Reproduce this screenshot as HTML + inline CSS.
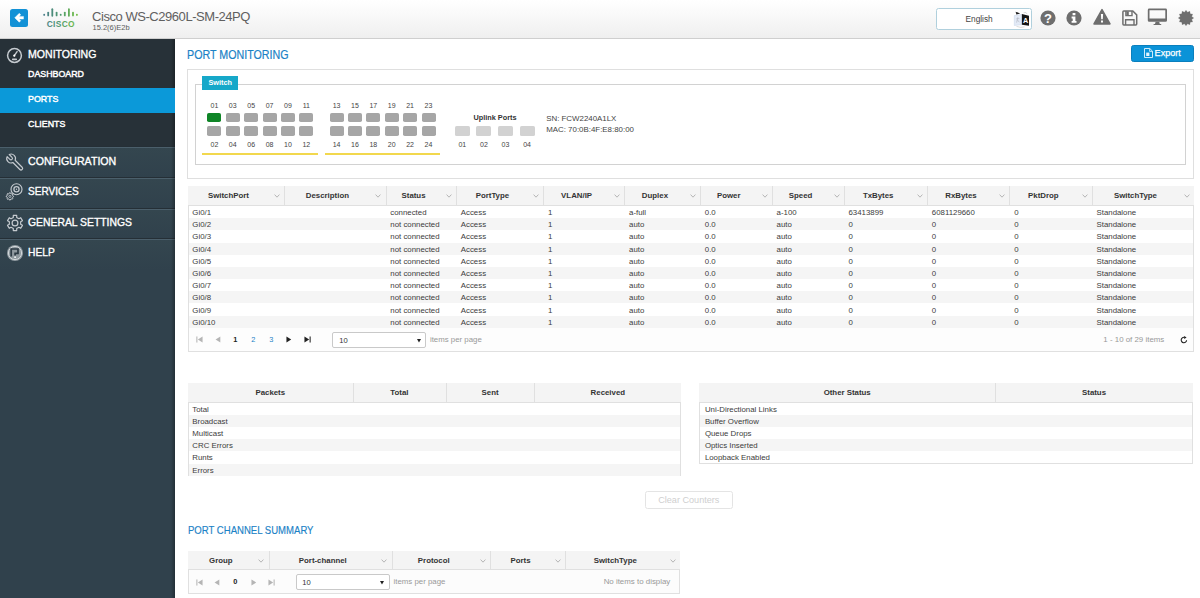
<!DOCTYPE html>
<html lang="en"><head><meta charset="utf-8"><title>Port Monitoring</title>
<style>
html,body{margin:0;padding:0;}
body{width:1200px;height:598px;overflow:hidden;position:relative;background:#fff;font-family:"Liberation Sans",sans-serif;}
.t{position:absolute;white-space:pre;}
.b{position:absolute;}
svg{display:block;overflow:visible;}
</style></head><body>
<div class="b" style="left:0.00px;top:0.00px;width:1200.00px;height:38.00px;background:linear-gradient(#ffffff,#f9f9f9 40%,#efefef);border-bottom:1px solid #cfcfcf;"></div>
<div class="b" style="left:10.00px;top:9.00px;width:17.50px;height:17.50px;background:#1291d6;border-radius:2.5px;"><svg width="17.5" height="17.5" viewBox="0 0 35 35" style="display:block"><path d="M9.5 17.5 L18.5 8.5 L21.5 11.5 L18.2 14.8 H27 V20.2 H18.2 L21.5 23.5 L18.5 26.5 Z" fill="#fff" stroke="#fff" stroke-width="0.8" stroke-linejoin="round"/></svg></div>
<svg class="b" style="left:42px;top:7px" width="38" height="22" viewBox="42 7 38 22"><defs><linearGradient id="cg" gradientUnits="userSpaceOnUse" x1="43" y1="0" x2="78" y2="0"><stop offset="0" stop-color="#4b7d8c"/><stop offset="0.5" stop-color="#4f9a6e"/><stop offset="1" stop-color="#74c043"/></linearGradient></defs><line x1="44.2" y1="14.6" x2="44.2" y2="14.95" stroke="url(#cg)" stroke-width="1.8" stroke-linecap="round"/><line x1="48.2" y1="12.6" x2="48.2" y2="15.4" stroke="url(#cg)" stroke-width="1.8" stroke-linecap="round"/><line x1="52.3" y1="9.2" x2="52.3" y2="15.8" stroke="url(#cg)" stroke-width="1.8" stroke-linecap="round"/><line x1="56.6" y1="12.6" x2="56.6" y2="15.4" stroke="url(#cg)" stroke-width="1.8" stroke-linecap="round"/><line x1="60.7" y1="14.6" x2="60.7" y2="14.95" stroke="url(#cg)" stroke-width="1.8" stroke-linecap="round"/><line x1="64.8" y1="12.6" x2="64.8" y2="15.4" stroke="url(#cg)" stroke-width="1.8" stroke-linecap="round"/><line x1="68.9" y1="9.2" x2="68.9" y2="15.8" stroke="url(#cg)" stroke-width="1.8" stroke-linecap="round"/><line x1="73.0" y1="12.6" x2="73.0" y2="15.4" stroke="url(#cg)" stroke-width="1.8" stroke-linecap="round"/><line x1="76.9" y1="14.6" x2="76.9" y2="14.95" stroke="url(#cg)" stroke-width="1.8" stroke-linecap="round"/><text x="60.8" y="26.5" text-anchor="middle" font-family="Liberation Sans, sans-serif" font-weight="bold" font-size="8.4" letter-spacing="0.35" fill="url(#cg)">CISCO</text></svg>
<div class="t" style="top:10.00px;height:14px;line-height:14px;font-size:13px;color:#606060;letter-spacing:-0.45px;left:92.00px;">Cisco WS-C2960L-SM-24PQ</div>
<div class="t" style="top:21.00px;height:14px;line-height:14px;font-size:7.5px;color:#5c5c5c;left:92.50px;">15.2(6)E2b</div>
<div class="b" style="left:936.10px;top:7.90px;width:95.60px;height:21.80px;box-sizing:border-box;background:#fff;border:1.4px solid #b0d0dd;border-radius:2.5px;"></div>
<div class="t" style="top:12.30px;height:14px;line-height:14px;font-size:8.3px;color:#444;left:965.50px;">English</div>
<svg class="b" style="left:1013px;top:10px" width="18" height="19" viewBox="0 0 18 19"><path d="M1.3 5.6 L8.9 4.4 V14.7 L1.3 15.5 Z" fill="#e3eaf6" stroke="#c5d2e8" stroke-width="0.5"/><path d="M4.9 7.2 L3.6 12.6 M4.2 9.6 L6.3 12.2 M3.4 8.6 H6.4" stroke="#b4b9c4" stroke-width="0.7" fill="none"/><path d="M2.6 1.7 L7.2 3.6 L3.4 4.6 Z" fill="#1c1c1c"/><path d="M8.9 4 L16 5.8 V15.8 L8.9 14.7 Z" fill="#161616"/><text x="12.5" y="13.2" text-anchor="middle" font-family="Liberation Sans, sans-serif" font-weight="bold" font-size="7.2" fill="#fff">A</text><path d="M3.5 16.4 Q8 18.2 11.5 16.8" stroke="#c4c4c4" stroke-width="0.6" fill="none"/><path d="M10.6 2.6 Q13.6 1.6 14.2 4.2" stroke="#c4c4c4" stroke-width="0.6" fill="none"/></svg>
<svg class="b" style="left:1040px;top:9.5px" width="16" height="16" viewBox="0 0 16 16"><circle cx="8" cy="8" r="7.6" fill="#6e6e6e"/><text x="8" y="12.7" text-anchor="middle" font-family="Liberation Sans, sans-serif" font-weight="bold" font-size="13" fill="#fff">?</text></svg>
<svg class="b" style="left:1066px;top:9.5px" width="16" height="16" viewBox="0 0 16 16"><circle cx="8" cy="8" r="7.6" fill="#6e6e6e"/><path d="M6.6 3 H9.4 V5.3 H6.6 Z M5.6 6.6 H9.4 V11 H10.5 V12.8 H5.6 V11 H6.7 V8.4 H5.6 Z" fill="#fff"/></svg>
<svg class="b" style="left:1092px;top:7.7px" width="20" height="18" viewBox="0 0 20 18"><path d="M10 1.6 L18 15.9 H2 Z" fill="#6e6e6e" stroke="#6e6e6e" stroke-width="1.5" stroke-linejoin="round"/><path d="M8.9 6 H11.1 L10.8 11.3 H9.2 Z M9 12.5 H11 V14.5 H9 Z" fill="#fff"/></svg>
<svg class="b" style="left:1121px;top:9.7px" width="17" height="16" viewBox="0 0 17 16"><path d="M2.8 1 H11.8 L15.7 4.9 V14.1 Q15.7 15 14.8 15 H2.8 Q1.9 15 1.9 14.1 V1.9 Q1.9 1 2.8 1 Z" fill="none" stroke="#6e6e6e" stroke-width="1.5"/><path d="M4.9 1 V5.6 H11 V1" fill="none" stroke="#6e6e6e" stroke-width="1.4"/><path d="M5.4 1.4 H7.8 V5 H5.4 Z" fill="#6e6e6e"/><path d="M4.6 15 V9.8 H13 V15" fill="none" stroke="#6e6e6e" stroke-width="1.4"/></svg>
<svg class="b" style="left:1147px;top:7.6px" width="21" height="18" viewBox="0 0 21 18"><path d="M2.2 0.6 H18.6 Q20 0.6 20 2 V12.4 Q20 13.8 18.6 13.8 H2.2 Q0.8 13.8 0.8 12.4 V2 Q0.8 0.6 2.2 0.6 Z M2.5 2.2 V10.4 H18.3 V2.2 Z" fill="#6e6e6e" fill-rule="evenodd"/><path d="M8.6 13.8 H12.2 L12.8 15.9 H14.2 V16.9 H6.6 V15.9 H8 Z" fill="#6e6e6e"/></svg>
<svg class="b" style="left:1177.9px;top:9.6px" width="16" height="16" viewBox="0 0 16 16"><polygon points="8.00,0.30 9.53,2.30 11.85,1.33 12.17,3.83 14.67,4.15 13.70,6.47 15.70,8.00 13.70,9.53 14.67,11.85 12.17,12.17 11.85,14.67 9.53,13.70 8.00,15.70 6.47,13.70 4.15,14.67 3.83,12.17 1.33,11.85 2.30,9.53 0.30,8.00 2.30,6.47 1.33,4.15 3.83,3.83 4.15,1.33 6.47,2.30" fill="#6e6e6e" stroke="#6e6e6e" stroke-width="0.3" stroke-linejoin="round"/></svg>
<div class="b" style="left:0.00px;top:38.60px;width:175.00px;height:559.40px;background:#30414c;"></div>
<div class="b" style="left:0.00px;top:38.60px;width:175.00px;height:108.90px;background:#273138;"></div>
<div class="b" style="left:0.00px;top:88.00px;width:175.00px;height:24.70px;background:#0b99d9;"></div>
<div class="b" style="left:0.00px;top:147.30px;width:175.00px;height:30.70px;background:linear-gradient(#34464f,#30414c);border-top:1px solid #4b5f6b;box-sizing:border-box;"></div>
<div class="b" style="left:0.00px;top:146.30px;width:175.00px;height:1.00px;background:#252f36;"></div>
<div class="t" style="top:154.00px;height:14px;line-height:14px;font-size:11px;color:#fff;left:27.60px;transform:scaleX(0.965);transform-origin:0 50%;-webkit-text-stroke:0.35px #fff;">CONFIGURATION</div>
<div class="b" style="left:0.00px;top:178.00px;width:175.00px;height:30.70px;background:linear-gradient(#34464f,#30414c);border-top:1px solid #4b5f6b;box-sizing:border-box;"></div>
<div class="b" style="left:0.00px;top:177.00px;width:175.00px;height:1.00px;background:#252f36;"></div>
<div class="t" style="top:184.40px;height:14px;line-height:14px;font-size:11px;color:#fff;left:27.60px;transform:scaleX(0.915);transform-origin:0 50%;-webkit-text-stroke:0.35px #fff;">SERVICES</div>
<div class="b" style="left:0.00px;top:208.60px;width:175.00px;height:30.70px;background:linear-gradient(#34464f,#30414c);border-top:1px solid #4b5f6b;box-sizing:border-box;"></div>
<div class="b" style="left:0.00px;top:207.60px;width:175.00px;height:1.00px;background:#252f36;"></div>
<div class="t" style="top:214.90px;height:14px;line-height:14px;font-size:11px;color:#fff;left:27.60px;transform:scaleX(0.943);transform-origin:0 50%;-webkit-text-stroke:0.35px #fff;">GENERAL SETTINGS</div>
<div class="b" style="left:0.00px;top:239.00px;width:175.00px;height:30.70px;background:linear-gradient(#34464f,#30414c);border-top:1px solid #4b5f6b;box-sizing:border-box;"></div>
<div class="b" style="left:0.00px;top:238.00px;width:175.00px;height:1.00px;background:#252f36;"></div>
<div class="t" style="top:245.40px;height:14px;line-height:14px;font-size:11px;color:#fff;left:27.60px;transform:scaleX(0.93);transform-origin:0 50%;-webkit-text-stroke:0.35px #fff;">HELP</div>
<div class="b" style="left:171.00px;top:39.00px;width:4.00px;height:559.00px;background:linear-gradient(90deg,rgba(0,0,0,0),rgba(0,0,0,0.28));"></div>
<div class="b" style="left:0.00px;top:88.00px;width:175.00px;height:24.70px;background:#0b99d9;"></div>
<div class="t" style="top:47.20px;height:14px;line-height:14px;font-size:11px;color:#fff;left:27.70px;transform:scaleX(0.96);transform-origin:0 50%;-webkit-text-stroke:0.35px #fff;">MONITORING</div>
<div class="t" style="top:66.80px;height:14px;line-height:14px;font-size:9.7px;color:#fff;left:28.00px;transform:scaleX(0.912);transform-origin:0 50%;-webkit-text-stroke:0.45px #fff;">DASHBOARD</div>
<div class="t" style="top:92.30px;height:14px;line-height:14px;font-size:9.7px;color:#fff;left:28.00px;transform:scaleX(0.912);transform-origin:0 50%;-webkit-text-stroke:0.45px #fff;">PORTS</div>
<div class="t" style="top:117.20px;height:14px;line-height:14px;font-size:9.7px;color:#fff;left:28.00px;transform:scaleX(0.912);transform-origin:0 50%;-webkit-text-stroke:0.45px #fff;">CLIENTS</div>
<svg class="b" style="left:6px;top:46.5px" width="17" height="17" viewBox="0 0 17 17"><circle cx="8.5" cy="8.5" r="6.9" fill="none" stroke="#c5cacf" stroke-width="1.5"/><path d="M8.3 8.7 L11.1 4.6" stroke="#c5cacf" stroke-width="1.4" stroke-linecap="round"/><circle cx="8.3" cy="8.7" r="1.1" fill="#fff"/><rect x="6" y="11.6" width="5" height="1.6" rx="0.6" fill="#c5cacf"/></svg>
<svg class="b" style="left:5px;top:152px" width="19" height="19" viewBox="0 0 19 19"><g transform="translate(6.1,6.5) rotate(-45)"><path d="M-1.5 -4.14 V-0.2 A1.5 1.5 0 0 0 1.5 -0.2 V-4.14 A4.4 4.4 0 0 1 1.6 4.1 V14 A1.6 1.6 0 0 1 -1.6 14 V4.1 A4.4 4.4 0 0 1 -1.5 -4.14 Z" fill="none" stroke="#c5cacf" stroke-width="1.15" stroke-linejoin="round"/></g></svg>
<svg class="b" style="left:2px;top:181px" width="22" height="22" viewBox="0 0 22 22"><circle cx="14.5" cy="8.2" r="5.5" fill="none" stroke="#c5cacf" stroke-width="1.15"/><circle cx="14.5" cy="8.2" r="2.6" fill="none" stroke="#c5cacf" stroke-width="1.3"/><circle cx="14.5" cy="8.2" r="0.7" fill="#c5cacf"/><polygon points="11.58,15.04 11.58,15.76 10.58,16.21 10.37,16.72 10.76,17.75 10.25,18.26 9.22,17.87 8.71,18.08 8.26,19.08 7.54,19.08 7.09,18.08 6.58,17.87 5.55,18.26 5.04,17.75 5.43,16.72 5.22,16.21 4.22,15.76 4.22,15.04 5.22,14.59 5.43,14.08 5.04,13.05 5.55,12.54 6.58,12.93 7.09,12.72 7.54,11.72 8.26,11.72 8.71,12.72 9.22,12.93 10.25,12.54 10.76,13.05 10.37,14.08 10.58,14.59" fill="none" stroke="#c5cacf" stroke-width="1.0" stroke-linejoin="round"/><circle cx="7.9" cy="15.4" r="1.1" fill="none" stroke="#c5cacf" stroke-width="0.8"/></svg>
<svg class="b" style="left:5.6px;top:213.9px" width="18" height="18" viewBox="0 0 18 18"><polygon points="7.29,3.46 7.30,1.39 10.70,1.39 10.71,3.46 12.94,4.75 14.74,3.72 16.44,6.67 14.66,7.71 14.66,10.29 16.44,11.33 14.74,14.28 12.94,13.25 10.71,14.54 10.70,16.61 7.30,16.61 7.29,14.54 5.06,13.25 3.26,14.28 1.56,11.33 3.34,10.29 3.34,7.71 1.56,6.67 3.26,3.72 5.06,4.75" fill="none" stroke="#c5cacf" stroke-width="1.2" stroke-linejoin="round"/><circle cx="9" cy="9" r="2.9" fill="none" stroke="#c5cacf" stroke-width="1.2"/></svg>
<svg class="b" style="left:5.7px;top:244.2px" width="18" height="18" viewBox="0 0 18 18"><circle cx="9" cy="9" r="8" fill="#8f999f"/><circle cx="9" cy="9" r="6.6" fill="none" stroke="#d3d8db" stroke-width="1"/><path d="M5.2 12.6 V5 H12 V9.4 H9.1 V11.4" fill="none" stroke="#2c3a44" stroke-width="1.7" stroke-linejoin="miter"/><rect x="8.2" y="12.4" width="1.8" height="1.6" fill="#e8ebed"/></svg>
<div class="t" style="top:48.00px;height:14px;line-height:14px;font-size:12.2px;color:#1b82c6;left:187.40px;transform:scaleX(0.877);transform-origin:0 50%;-webkit-text-stroke:0.2px #1b82c6;">PORT MONITORING</div>
<div class="b" style="left:1131.30px;top:45.00px;width:62.60px;height:17.30px;box-sizing:border-box;background:#0b93d8;border:1px solid #0a7fbd;border-radius:2.5px;"></div>
<svg class="b" style="left:1144px;top:48.2px" width="9" height="10" viewBox="0 0 9 10"><path d="M0.5 0.5 H5.8 L8.5 3.2 V9.5 H0.5 Z" fill="none" stroke="#e6f6ff" stroke-width="0.9" stroke-linejoin="round"/><path d="M5.6 0.6 V3.4 H8.4" fill="none" stroke="#e6f6ff" stroke-width="0.8"/><path d="M2.2 4.6 H5.4 V8 H2.2 Z" fill="#e6f6ff"/></svg>
<div class="t" style="top:45.80px;height:14px;line-height:14px;font-size:9.1px;color:#fff;left:1154.60px;-webkit-text-stroke:0.25px #fff;">Export</div>
<div class="b" style="left:187.00px;top:69.30px;width:1006.50px;height:110.20px;box-sizing:border-box;border:1px solid #dfdfdf;background:#fff;"></div>
<div class="b" style="left:194.50px;top:84.00px;width:991.50px;height:81.00px;box-sizing:border-box;border:1px solid #d2d2d2;background:#fff;"></div>
<div class="b" style="left:202.00px;top:76.30px;width:35.50px;height:13.50px;background:#16a8c9;"></div>
<div class="t" style="top:76.10px;height:14px;line-height:14px;font-size:7.3px;color:#fff;font-weight:bold;left:208.40px;">Switch</div>
<div class="b" style="left:207.40px;top:112.60px;width:14.00px;height:9.90px;background:#0f8527;border-radius:1.8px;"></div>
<div class="b" style="left:207.40px;top:126.40px;width:14.00px;height:10.10px;background:#a6a6a6;border-radius:1.8px;"></div>
<div class="t" style="top:98.80px;height:14px;line-height:14px;font-size:7px;color:#444;left:64.40px;width:300px;text-align:center;">01</div>
<div class="t" style="top:138.30px;height:14px;line-height:14px;font-size:7px;color:#444;left:64.40px;width:300px;text-align:center;">02</div>
<div class="b" style="left:225.78px;top:112.60px;width:14.00px;height:9.90px;background:#a6a6a6;border-radius:1.8px;"></div>
<div class="b" style="left:225.78px;top:126.40px;width:14.00px;height:10.10px;background:#a6a6a6;border-radius:1.8px;"></div>
<div class="t" style="top:98.80px;height:14px;line-height:14px;font-size:7px;color:#444;left:82.78px;width:300px;text-align:center;">03</div>
<div class="t" style="top:138.30px;height:14px;line-height:14px;font-size:7px;color:#444;left:82.78px;width:300px;text-align:center;">04</div>
<div class="b" style="left:244.16px;top:112.60px;width:14.00px;height:9.90px;background:#a6a6a6;border-radius:1.8px;"></div>
<div class="b" style="left:244.16px;top:126.40px;width:14.00px;height:10.10px;background:#a6a6a6;border-radius:1.8px;"></div>
<div class="t" style="top:98.80px;height:14px;line-height:14px;font-size:7px;color:#444;left:101.16px;width:300px;text-align:center;">05</div>
<div class="t" style="top:138.30px;height:14px;line-height:14px;font-size:7px;color:#444;left:101.16px;width:300px;text-align:center;">06</div>
<div class="b" style="left:262.54px;top:112.60px;width:14.00px;height:9.90px;background:#a6a6a6;border-radius:1.8px;"></div>
<div class="b" style="left:262.54px;top:126.40px;width:14.00px;height:10.10px;background:#a6a6a6;border-radius:1.8px;"></div>
<div class="t" style="top:98.80px;height:14px;line-height:14px;font-size:7px;color:#444;left:119.54px;width:300px;text-align:center;">07</div>
<div class="t" style="top:138.30px;height:14px;line-height:14px;font-size:7px;color:#444;left:119.54px;width:300px;text-align:center;">08</div>
<div class="b" style="left:280.92px;top:112.60px;width:14.00px;height:9.90px;background:#a6a6a6;border-radius:1.8px;"></div>
<div class="b" style="left:280.92px;top:126.40px;width:14.00px;height:10.10px;background:#a6a6a6;border-radius:1.8px;"></div>
<div class="t" style="top:98.80px;height:14px;line-height:14px;font-size:7px;color:#444;left:137.92px;width:300px;text-align:center;">09</div>
<div class="t" style="top:138.30px;height:14px;line-height:14px;font-size:7px;color:#444;left:137.92px;width:300px;text-align:center;">10</div>
<div class="b" style="left:299.30px;top:112.60px;width:14.00px;height:9.90px;background:#a6a6a6;border-radius:1.8px;"></div>
<div class="b" style="left:299.30px;top:126.40px;width:14.00px;height:10.10px;background:#a6a6a6;border-radius:1.8px;"></div>
<div class="t" style="top:98.80px;height:14px;line-height:14px;font-size:7px;color:#444;left:156.30px;width:300px;text-align:center;">11</div>
<div class="t" style="top:138.30px;height:14px;line-height:14px;font-size:7px;color:#444;left:156.30px;width:300px;text-align:center;">12</div>
<div class="b" style="left:329.60px;top:112.60px;width:14.00px;height:9.90px;background:#a6a6a6;border-radius:1.8px;"></div>
<div class="b" style="left:329.60px;top:126.40px;width:14.00px;height:10.10px;background:#a6a6a6;border-radius:1.8px;"></div>
<div class="t" style="top:98.80px;height:14px;line-height:14px;font-size:7px;color:#444;left:186.60px;width:300px;text-align:center;">13</div>
<div class="t" style="top:138.30px;height:14px;line-height:14px;font-size:7px;color:#444;left:186.60px;width:300px;text-align:center;">14</div>
<div class="b" style="left:347.98px;top:112.60px;width:14.00px;height:9.90px;background:#a6a6a6;border-radius:1.8px;"></div>
<div class="b" style="left:347.98px;top:126.40px;width:14.00px;height:10.10px;background:#a6a6a6;border-radius:1.8px;"></div>
<div class="t" style="top:98.80px;height:14px;line-height:14px;font-size:7px;color:#444;left:204.98px;width:300px;text-align:center;">15</div>
<div class="t" style="top:138.30px;height:14px;line-height:14px;font-size:7px;color:#444;left:204.98px;width:300px;text-align:center;">16</div>
<div class="b" style="left:366.36px;top:112.60px;width:14.00px;height:9.90px;background:#a6a6a6;border-radius:1.8px;"></div>
<div class="b" style="left:366.36px;top:126.40px;width:14.00px;height:10.10px;background:#a6a6a6;border-radius:1.8px;"></div>
<div class="t" style="top:98.80px;height:14px;line-height:14px;font-size:7px;color:#444;left:223.36px;width:300px;text-align:center;">17</div>
<div class="t" style="top:138.30px;height:14px;line-height:14px;font-size:7px;color:#444;left:223.36px;width:300px;text-align:center;">18</div>
<div class="b" style="left:384.74px;top:112.60px;width:14.00px;height:9.90px;background:#a6a6a6;border-radius:1.8px;"></div>
<div class="b" style="left:384.74px;top:126.40px;width:14.00px;height:10.10px;background:#a6a6a6;border-radius:1.8px;"></div>
<div class="t" style="top:98.80px;height:14px;line-height:14px;font-size:7px;color:#444;left:241.74px;width:300px;text-align:center;">19</div>
<div class="t" style="top:138.30px;height:14px;line-height:14px;font-size:7px;color:#444;left:241.74px;width:300px;text-align:center;">20</div>
<div class="b" style="left:403.12px;top:112.60px;width:14.00px;height:9.90px;background:#a6a6a6;border-radius:1.8px;"></div>
<div class="b" style="left:403.12px;top:126.40px;width:14.00px;height:10.10px;background:#a6a6a6;border-radius:1.8px;"></div>
<div class="t" style="top:98.80px;height:14px;line-height:14px;font-size:7px;color:#444;left:260.12px;width:300px;text-align:center;">21</div>
<div class="t" style="top:138.30px;height:14px;line-height:14px;font-size:7px;color:#444;left:260.12px;width:300px;text-align:center;">22</div>
<div class="b" style="left:421.50px;top:112.60px;width:14.00px;height:9.90px;background:#a6a6a6;border-radius:1.8px;"></div>
<div class="b" style="left:421.50px;top:126.40px;width:14.00px;height:10.10px;background:#a6a6a6;border-radius:1.8px;"></div>
<div class="t" style="top:98.80px;height:14px;line-height:14px;font-size:7px;color:#444;left:278.50px;width:300px;text-align:center;">23</div>
<div class="t" style="top:138.30px;height:14px;line-height:14px;font-size:7px;color:#444;left:278.50px;width:300px;text-align:center;">24</div>
<div class="b" style="left:202.30px;top:152.90px;width:115.50px;height:1.90px;background:#f2d84e;"></div>
<div class="b" style="left:324.80px;top:152.90px;width:115.50px;height:1.90px;background:#f2d84e;"></div>
<div class="t" style="top:110.90px;height:14px;line-height:14px;font-size:7.3px;color:#333;font-weight:bold;left:345.00px;width:300px;text-align:center;">Uplink Ports</div>
<div class="b" style="left:454.80px;top:126.00px;width:15.00px;height:10.20px;background:#d2d2d2;border-radius:1.6px;"></div>
<div class="t" style="top:137.90px;height:14px;line-height:14px;font-size:7px;color:#444;left:312.30px;width:300px;text-align:center;">01</div>
<div class="b" style="left:476.40px;top:126.00px;width:15.00px;height:10.20px;background:#d2d2d2;border-radius:1.6px;"></div>
<div class="t" style="top:137.90px;height:14px;line-height:14px;font-size:7px;color:#444;left:333.90px;width:300px;text-align:center;">02</div>
<div class="b" style="left:498.00px;top:126.00px;width:15.00px;height:10.20px;background:#d2d2d2;border-radius:1.6px;"></div>
<div class="t" style="top:137.90px;height:14px;line-height:14px;font-size:7px;color:#444;left:355.50px;width:300px;text-align:center;">03</div>
<div class="b" style="left:519.60px;top:126.00px;width:15.00px;height:10.20px;background:#d2d2d2;border-radius:1.6px;"></div>
<div class="t" style="top:137.90px;height:14px;line-height:14px;font-size:7px;color:#444;left:377.10px;width:300px;text-align:center;">04</div>
<div class="t" style="top:112.30px;height:14px;line-height:14px;font-size:7.9px;color:#444;left:546.20px;">SN: FCW2240A1LX</div>
<div class="t" style="top:123.40px;height:14px;line-height:14px;font-size:7.9px;color:#444;left:546.20px;">MAC: 70:0B:4F:E8:80:00</div>
<div class="b" style="left:187.50px;top:186.30px;width:1006.20px;height:165.70px;box-sizing:border-box;border:1px solid #e0e0e0;background:#fff;"></div>
<div class="b" style="left:187.50px;top:186.30px;width:1006.20px;height:19.60px;box-sizing:border-box;background:#f4f4f4;border-bottom:1px solid #e0e0e0;"></div>
<div class="t" style="top:189.20px;height:14px;line-height:14px;font-size:7.85px;color:#333;font-weight:bold;left:78.40px;width:300px;text-align:center;">SwitchPort</div>
<svg class="b" style="left:273.50px;top:194.10px" width="6" height="4" viewBox="0 0 6 4"><path d="M0.6 0.6 L3 3.2 L5.4 0.6" fill="none" stroke="#9a9a9a" stroke-width="0.7"/></svg>
<div class="b" style="left:283.70px;top:186.30px;width:1.00px;height:19.60px;background:#e0e0e0;"></div>
<div class="t" style="top:189.20px;height:14px;line-height:14px;font-size:7.85px;color:#333;font-weight:bold;left:177.40px;width:300px;text-align:center;">Description</div>
<svg class="b" style="left:375.30px;top:194.10px" width="6" height="4" viewBox="0 0 6 4"><path d="M0.6 0.6 L3 3.2 L5.4 0.6" fill="none" stroke="#9a9a9a" stroke-width="0.7"/></svg>
<div class="b" style="left:385.50px;top:186.30px;width:1.00px;height:19.60px;background:#e0e0e0;"></div>
<div class="t" style="top:189.20px;height:14px;line-height:14px;font-size:7.85px;color:#333;font-weight:bold;left:263.55px;width:300px;text-align:center;">Status</div>
<svg class="b" style="left:445.80px;top:194.10px" width="6" height="4" viewBox="0 0 6 4"><path d="M0.6 0.6 L3 3.2 L5.4 0.6" fill="none" stroke="#9a9a9a" stroke-width="0.7"/></svg>
<div class="b" style="left:456.00px;top:186.30px;width:1.00px;height:19.60px;background:#e0e0e0;"></div>
<div class="t" style="top:189.20px;height:14px;line-height:14px;font-size:7.85px;color:#333;font-weight:bold;left:342.45px;width:300px;text-align:center;">PortType</div>
<svg class="b" style="left:533.10px;top:194.10px" width="6" height="4" viewBox="0 0 6 4"><path d="M0.6 0.6 L3 3.2 L5.4 0.6" fill="none" stroke="#9a9a9a" stroke-width="0.7"/></svg>
<div class="b" style="left:543.30px;top:186.30px;width:1.00px;height:19.60px;background:#e0e0e0;"></div>
<div class="t" style="top:189.20px;height:14px;line-height:14px;font-size:7.85px;color:#333;font-weight:bold;left:426.60px;width:300px;text-align:center;">VLAN/IP</div>
<svg class="b" style="left:614.10px;top:194.10px" width="6" height="4" viewBox="0 0 6 4"><path d="M0.6 0.6 L3 3.2 L5.4 0.6" fill="none" stroke="#9a9a9a" stroke-width="0.7"/></svg>
<div class="b" style="left:624.30px;top:186.30px;width:1.00px;height:19.60px;background:#e0e0e0;"></div>
<div class="t" style="top:189.20px;height:14px;line-height:14px;font-size:7.85px;color:#333;font-weight:bold;left:504.95px;width:300px;text-align:center;">Duplex</div>
<svg class="b" style="left:689.80px;top:194.10px" width="6" height="4" viewBox="0 0 6 4"><path d="M0.6 0.6 L3 3.2 L5.4 0.6" fill="none" stroke="#9a9a9a" stroke-width="0.7"/></svg>
<div class="b" style="left:700.00px;top:186.30px;width:1.00px;height:19.60px;background:#e0e0e0;"></div>
<div class="t" style="top:189.20px;height:14px;line-height:14px;font-size:7.85px;color:#333;font-weight:bold;left:578.70px;width:300px;text-align:center;">Power</div>
<svg class="b" style="left:761.60px;top:194.10px" width="6" height="4" viewBox="0 0 6 4"><path d="M0.6 0.6 L3 3.2 L5.4 0.6" fill="none" stroke="#9a9a9a" stroke-width="0.7"/></svg>
<div class="b" style="left:771.80px;top:186.30px;width:1.00px;height:19.60px;background:#e0e0e0;"></div>
<div class="t" style="top:189.20px;height:14px;line-height:14px;font-size:7.85px;color:#333;font-weight:bold;left:650.55px;width:300px;text-align:center;">Speed</div>
<svg class="b" style="left:833.50px;top:194.10px" width="6" height="4" viewBox="0 0 6 4"><path d="M0.6 0.6 L3 3.2 L5.4 0.6" fill="none" stroke="#9a9a9a" stroke-width="0.7"/></svg>
<div class="b" style="left:843.70px;top:186.30px;width:1.00px;height:19.60px;background:#e0e0e0;"></div>
<div class="t" style="top:189.20px;height:14px;line-height:14px;font-size:7.85px;color:#333;font-weight:bold;left:728.15px;width:300px;text-align:center;">TxBytes</div>
<svg class="b" style="left:916.80px;top:194.10px" width="6" height="4" viewBox="0 0 6 4"><path d="M0.6 0.6 L3 3.2 L5.4 0.6" fill="none" stroke="#9a9a9a" stroke-width="0.7"/></svg>
<div class="b" style="left:927.00px;top:186.30px;width:1.00px;height:19.60px;background:#e0e0e0;"></div>
<div class="t" style="top:189.20px;height:14px;line-height:14px;font-size:7.85px;color:#333;font-weight:bold;left:811.00px;width:300px;text-align:center;">RxBytes</div>
<svg class="b" style="left:999.20px;top:194.10px" width="6" height="4" viewBox="0 0 6 4"><path d="M0.6 0.6 L3 3.2 L5.4 0.6" fill="none" stroke="#9a9a9a" stroke-width="0.7"/></svg>
<div class="b" style="left:1009.40px;top:186.30px;width:1.00px;height:19.60px;background:#e0e0e0;"></div>
<div class="t" style="top:189.20px;height:14px;line-height:14px;font-size:7.85px;color:#333;font-weight:bold;left:893.35px;width:300px;text-align:center;">PktDrop</div>
<svg class="b" style="left:1081.50px;top:194.10px" width="6" height="4" viewBox="0 0 6 4"><path d="M0.6 0.6 L3 3.2 L5.4 0.6" fill="none" stroke="#9a9a9a" stroke-width="0.7"/></svg>
<div class="b" style="left:1091.70px;top:186.30px;width:1.00px;height:19.60px;background:#e0e0e0;"></div>
<div class="t" style="top:189.20px;height:14px;line-height:14px;font-size:7.85px;color:#333;font-weight:bold;left:985.50px;width:300px;text-align:center;">SwitchType</div>
<svg class="b" style="left:1183.50px;top:194.10px" width="6" height="4" viewBox="0 0 6 4"><path d="M0.6 0.6 L3 3.2 L5.4 0.6" fill="none" stroke="#9a9a9a" stroke-width="0.7"/></svg>
<div class="t" style="top:205.90px;height:14px;line-height:14px;font-size:7.85px;color:#3c3c3c;left:192.30px;">Gi0/1</div>
<div class="t" style="top:205.90px;height:14px;line-height:14px;font-size:7.85px;color:#3c3c3c;left:390.30px;">connected</div>
<div class="t" style="top:205.90px;height:14px;line-height:14px;font-size:7.85px;color:#3c3c3c;left:460.80px;">Access</div>
<div class="t" style="top:205.90px;height:14px;line-height:14px;font-size:7.85px;color:#3c3c3c;left:548.10px;">1</div>
<div class="t" style="top:205.90px;height:14px;line-height:14px;font-size:7.85px;color:#3c3c3c;left:629.10px;">a-full</div>
<div class="t" style="top:205.90px;height:14px;line-height:14px;font-size:7.85px;color:#3c3c3c;left:704.80px;">0.0</div>
<div class="t" style="top:205.90px;height:14px;line-height:14px;font-size:7.85px;color:#3c3c3c;left:776.60px;">a-100</div>
<div class="t" style="top:205.90px;height:14px;line-height:14px;font-size:7.85px;color:#3c3c3c;left:848.50px;">63413899</div>
<div class="t" style="top:205.90px;height:14px;line-height:14px;font-size:7.85px;color:#3c3c3c;left:931.80px;">6081129660</div>
<div class="t" style="top:205.90px;height:14px;line-height:14px;font-size:7.85px;color:#3c3c3c;left:1014.20px;">0</div>
<div class="t" style="top:205.90px;height:14px;line-height:14px;font-size:7.85px;color:#3c3c3c;left:1096.50px;">Standalone</div>
<div class="b" style="left:188.50px;top:218.10px;width:1004.20px;height:12.20px;background:#f5f5f5;"></div>
<div class="t" style="top:218.10px;height:14px;line-height:14px;font-size:7.85px;color:#3c3c3c;left:192.30px;">Gi0/2</div>
<div class="t" style="top:218.10px;height:14px;line-height:14px;font-size:7.85px;color:#3c3c3c;left:390.30px;">not connected</div>
<div class="t" style="top:218.10px;height:14px;line-height:14px;font-size:7.85px;color:#3c3c3c;left:460.80px;">Access</div>
<div class="t" style="top:218.10px;height:14px;line-height:14px;font-size:7.85px;color:#3c3c3c;left:548.10px;">1</div>
<div class="t" style="top:218.10px;height:14px;line-height:14px;font-size:7.85px;color:#3c3c3c;left:629.10px;">auto</div>
<div class="t" style="top:218.10px;height:14px;line-height:14px;font-size:7.85px;color:#3c3c3c;left:704.80px;">0.0</div>
<div class="t" style="top:218.10px;height:14px;line-height:14px;font-size:7.85px;color:#3c3c3c;left:776.60px;">auto</div>
<div class="t" style="top:218.10px;height:14px;line-height:14px;font-size:7.85px;color:#3c3c3c;left:848.50px;">0</div>
<div class="t" style="top:218.10px;height:14px;line-height:14px;font-size:7.85px;color:#3c3c3c;left:931.80px;">0</div>
<div class="t" style="top:218.10px;height:14px;line-height:14px;font-size:7.85px;color:#3c3c3c;left:1014.20px;">0</div>
<div class="t" style="top:218.10px;height:14px;line-height:14px;font-size:7.85px;color:#3c3c3c;left:1096.50px;">Standalone</div>
<div class="t" style="top:230.30px;height:14px;line-height:14px;font-size:7.85px;color:#3c3c3c;left:192.30px;">Gi0/3</div>
<div class="t" style="top:230.30px;height:14px;line-height:14px;font-size:7.85px;color:#3c3c3c;left:390.30px;">not connected</div>
<div class="t" style="top:230.30px;height:14px;line-height:14px;font-size:7.85px;color:#3c3c3c;left:460.80px;">Access</div>
<div class="t" style="top:230.30px;height:14px;line-height:14px;font-size:7.85px;color:#3c3c3c;left:548.10px;">1</div>
<div class="t" style="top:230.30px;height:14px;line-height:14px;font-size:7.85px;color:#3c3c3c;left:629.10px;">auto</div>
<div class="t" style="top:230.30px;height:14px;line-height:14px;font-size:7.85px;color:#3c3c3c;left:704.80px;">0.0</div>
<div class="t" style="top:230.30px;height:14px;line-height:14px;font-size:7.85px;color:#3c3c3c;left:776.60px;">auto</div>
<div class="t" style="top:230.30px;height:14px;line-height:14px;font-size:7.85px;color:#3c3c3c;left:848.50px;">0</div>
<div class="t" style="top:230.30px;height:14px;line-height:14px;font-size:7.85px;color:#3c3c3c;left:931.80px;">0</div>
<div class="t" style="top:230.30px;height:14px;line-height:14px;font-size:7.85px;color:#3c3c3c;left:1014.20px;">0</div>
<div class="t" style="top:230.30px;height:14px;line-height:14px;font-size:7.85px;color:#3c3c3c;left:1096.50px;">Standalone</div>
<div class="b" style="left:188.50px;top:242.50px;width:1004.20px;height:12.20px;background:#f5f5f5;"></div>
<div class="t" style="top:242.50px;height:14px;line-height:14px;font-size:7.85px;color:#3c3c3c;left:192.30px;">Gi0/4</div>
<div class="t" style="top:242.50px;height:14px;line-height:14px;font-size:7.85px;color:#3c3c3c;left:390.30px;">not connected</div>
<div class="t" style="top:242.50px;height:14px;line-height:14px;font-size:7.85px;color:#3c3c3c;left:460.80px;">Access</div>
<div class="t" style="top:242.50px;height:14px;line-height:14px;font-size:7.85px;color:#3c3c3c;left:548.10px;">1</div>
<div class="t" style="top:242.50px;height:14px;line-height:14px;font-size:7.85px;color:#3c3c3c;left:629.10px;">auto</div>
<div class="t" style="top:242.50px;height:14px;line-height:14px;font-size:7.85px;color:#3c3c3c;left:704.80px;">0.0</div>
<div class="t" style="top:242.50px;height:14px;line-height:14px;font-size:7.85px;color:#3c3c3c;left:776.60px;">auto</div>
<div class="t" style="top:242.50px;height:14px;line-height:14px;font-size:7.85px;color:#3c3c3c;left:848.50px;">0</div>
<div class="t" style="top:242.50px;height:14px;line-height:14px;font-size:7.85px;color:#3c3c3c;left:931.80px;">0</div>
<div class="t" style="top:242.50px;height:14px;line-height:14px;font-size:7.85px;color:#3c3c3c;left:1014.20px;">0</div>
<div class="t" style="top:242.50px;height:14px;line-height:14px;font-size:7.85px;color:#3c3c3c;left:1096.50px;">Standalone</div>
<div class="t" style="top:254.70px;height:14px;line-height:14px;font-size:7.85px;color:#3c3c3c;left:192.30px;">Gi0/5</div>
<div class="t" style="top:254.70px;height:14px;line-height:14px;font-size:7.85px;color:#3c3c3c;left:390.30px;">not connected</div>
<div class="t" style="top:254.70px;height:14px;line-height:14px;font-size:7.85px;color:#3c3c3c;left:460.80px;">Access</div>
<div class="t" style="top:254.70px;height:14px;line-height:14px;font-size:7.85px;color:#3c3c3c;left:548.10px;">1</div>
<div class="t" style="top:254.70px;height:14px;line-height:14px;font-size:7.85px;color:#3c3c3c;left:629.10px;">auto</div>
<div class="t" style="top:254.70px;height:14px;line-height:14px;font-size:7.85px;color:#3c3c3c;left:704.80px;">0.0</div>
<div class="t" style="top:254.70px;height:14px;line-height:14px;font-size:7.85px;color:#3c3c3c;left:776.60px;">auto</div>
<div class="t" style="top:254.70px;height:14px;line-height:14px;font-size:7.85px;color:#3c3c3c;left:848.50px;">0</div>
<div class="t" style="top:254.70px;height:14px;line-height:14px;font-size:7.85px;color:#3c3c3c;left:931.80px;">0</div>
<div class="t" style="top:254.70px;height:14px;line-height:14px;font-size:7.85px;color:#3c3c3c;left:1014.20px;">0</div>
<div class="t" style="top:254.70px;height:14px;line-height:14px;font-size:7.85px;color:#3c3c3c;left:1096.50px;">Standalone</div>
<div class="b" style="left:188.50px;top:266.90px;width:1004.20px;height:12.20px;background:#f5f5f5;"></div>
<div class="t" style="top:266.90px;height:14px;line-height:14px;font-size:7.85px;color:#3c3c3c;left:192.30px;">Gi0/6</div>
<div class="t" style="top:266.90px;height:14px;line-height:14px;font-size:7.85px;color:#3c3c3c;left:390.30px;">not connected</div>
<div class="t" style="top:266.90px;height:14px;line-height:14px;font-size:7.85px;color:#3c3c3c;left:460.80px;">Access</div>
<div class="t" style="top:266.90px;height:14px;line-height:14px;font-size:7.85px;color:#3c3c3c;left:548.10px;">1</div>
<div class="t" style="top:266.90px;height:14px;line-height:14px;font-size:7.85px;color:#3c3c3c;left:629.10px;">auto</div>
<div class="t" style="top:266.90px;height:14px;line-height:14px;font-size:7.85px;color:#3c3c3c;left:704.80px;">0.0</div>
<div class="t" style="top:266.90px;height:14px;line-height:14px;font-size:7.85px;color:#3c3c3c;left:776.60px;">auto</div>
<div class="t" style="top:266.90px;height:14px;line-height:14px;font-size:7.85px;color:#3c3c3c;left:848.50px;">0</div>
<div class="t" style="top:266.90px;height:14px;line-height:14px;font-size:7.85px;color:#3c3c3c;left:931.80px;">0</div>
<div class="t" style="top:266.90px;height:14px;line-height:14px;font-size:7.85px;color:#3c3c3c;left:1014.20px;">0</div>
<div class="t" style="top:266.90px;height:14px;line-height:14px;font-size:7.85px;color:#3c3c3c;left:1096.50px;">Standalone</div>
<div class="t" style="top:279.10px;height:14px;line-height:14px;font-size:7.85px;color:#3c3c3c;left:192.30px;">Gi0/7</div>
<div class="t" style="top:279.10px;height:14px;line-height:14px;font-size:7.85px;color:#3c3c3c;left:390.30px;">not connected</div>
<div class="t" style="top:279.10px;height:14px;line-height:14px;font-size:7.85px;color:#3c3c3c;left:460.80px;">Access</div>
<div class="t" style="top:279.10px;height:14px;line-height:14px;font-size:7.85px;color:#3c3c3c;left:548.10px;">1</div>
<div class="t" style="top:279.10px;height:14px;line-height:14px;font-size:7.85px;color:#3c3c3c;left:629.10px;">auto</div>
<div class="t" style="top:279.10px;height:14px;line-height:14px;font-size:7.85px;color:#3c3c3c;left:704.80px;">0.0</div>
<div class="t" style="top:279.10px;height:14px;line-height:14px;font-size:7.85px;color:#3c3c3c;left:776.60px;">auto</div>
<div class="t" style="top:279.10px;height:14px;line-height:14px;font-size:7.85px;color:#3c3c3c;left:848.50px;">0</div>
<div class="t" style="top:279.10px;height:14px;line-height:14px;font-size:7.85px;color:#3c3c3c;left:931.80px;">0</div>
<div class="t" style="top:279.10px;height:14px;line-height:14px;font-size:7.85px;color:#3c3c3c;left:1014.20px;">0</div>
<div class="t" style="top:279.10px;height:14px;line-height:14px;font-size:7.85px;color:#3c3c3c;left:1096.50px;">Standalone</div>
<div class="b" style="left:188.50px;top:291.30px;width:1004.20px;height:12.20px;background:#f5f5f5;"></div>
<div class="t" style="top:291.30px;height:14px;line-height:14px;font-size:7.85px;color:#3c3c3c;left:192.30px;">Gi0/8</div>
<div class="t" style="top:291.30px;height:14px;line-height:14px;font-size:7.85px;color:#3c3c3c;left:390.30px;">not connected</div>
<div class="t" style="top:291.30px;height:14px;line-height:14px;font-size:7.85px;color:#3c3c3c;left:460.80px;">Access</div>
<div class="t" style="top:291.30px;height:14px;line-height:14px;font-size:7.85px;color:#3c3c3c;left:548.10px;">1</div>
<div class="t" style="top:291.30px;height:14px;line-height:14px;font-size:7.85px;color:#3c3c3c;left:629.10px;">auto</div>
<div class="t" style="top:291.30px;height:14px;line-height:14px;font-size:7.85px;color:#3c3c3c;left:704.80px;">0.0</div>
<div class="t" style="top:291.30px;height:14px;line-height:14px;font-size:7.85px;color:#3c3c3c;left:776.60px;">auto</div>
<div class="t" style="top:291.30px;height:14px;line-height:14px;font-size:7.85px;color:#3c3c3c;left:848.50px;">0</div>
<div class="t" style="top:291.30px;height:14px;line-height:14px;font-size:7.85px;color:#3c3c3c;left:931.80px;">0</div>
<div class="t" style="top:291.30px;height:14px;line-height:14px;font-size:7.85px;color:#3c3c3c;left:1014.20px;">0</div>
<div class="t" style="top:291.30px;height:14px;line-height:14px;font-size:7.85px;color:#3c3c3c;left:1096.50px;">Standalone</div>
<div class="t" style="top:303.50px;height:14px;line-height:14px;font-size:7.85px;color:#3c3c3c;left:192.30px;">Gi0/9</div>
<div class="t" style="top:303.50px;height:14px;line-height:14px;font-size:7.85px;color:#3c3c3c;left:390.30px;">not connected</div>
<div class="t" style="top:303.50px;height:14px;line-height:14px;font-size:7.85px;color:#3c3c3c;left:460.80px;">Access</div>
<div class="t" style="top:303.50px;height:14px;line-height:14px;font-size:7.85px;color:#3c3c3c;left:548.10px;">1</div>
<div class="t" style="top:303.50px;height:14px;line-height:14px;font-size:7.85px;color:#3c3c3c;left:629.10px;">auto</div>
<div class="t" style="top:303.50px;height:14px;line-height:14px;font-size:7.85px;color:#3c3c3c;left:704.80px;">0.0</div>
<div class="t" style="top:303.50px;height:14px;line-height:14px;font-size:7.85px;color:#3c3c3c;left:776.60px;">auto</div>
<div class="t" style="top:303.50px;height:14px;line-height:14px;font-size:7.85px;color:#3c3c3c;left:848.50px;">0</div>
<div class="t" style="top:303.50px;height:14px;line-height:14px;font-size:7.85px;color:#3c3c3c;left:931.80px;">0</div>
<div class="t" style="top:303.50px;height:14px;line-height:14px;font-size:7.85px;color:#3c3c3c;left:1014.20px;">0</div>
<div class="t" style="top:303.50px;height:14px;line-height:14px;font-size:7.85px;color:#3c3c3c;left:1096.50px;">Standalone</div>
<div class="b" style="left:188.50px;top:315.70px;width:1004.20px;height:12.20px;background:#f5f5f5;"></div>
<div class="t" style="top:315.70px;height:14px;line-height:14px;font-size:7.85px;color:#3c3c3c;left:192.30px;">Gi0/10</div>
<div class="t" style="top:315.70px;height:14px;line-height:14px;font-size:7.85px;color:#3c3c3c;left:390.30px;">not connected</div>
<div class="t" style="top:315.70px;height:14px;line-height:14px;font-size:7.85px;color:#3c3c3c;left:460.80px;">Access</div>
<div class="t" style="top:315.70px;height:14px;line-height:14px;font-size:7.85px;color:#3c3c3c;left:548.10px;">1</div>
<div class="t" style="top:315.70px;height:14px;line-height:14px;font-size:7.85px;color:#3c3c3c;left:629.10px;">auto</div>
<div class="t" style="top:315.70px;height:14px;line-height:14px;font-size:7.85px;color:#3c3c3c;left:704.80px;">0.0</div>
<div class="t" style="top:315.70px;height:14px;line-height:14px;font-size:7.85px;color:#3c3c3c;left:776.60px;">auto</div>
<div class="t" style="top:315.70px;height:14px;line-height:14px;font-size:7.85px;color:#3c3c3c;left:848.50px;">0</div>
<div class="t" style="top:315.70px;height:14px;line-height:14px;font-size:7.85px;color:#3c3c3c;left:931.80px;">0</div>
<div class="t" style="top:315.70px;height:14px;line-height:14px;font-size:7.85px;color:#3c3c3c;left:1014.20px;">0</div>
<div class="t" style="top:315.70px;height:14px;line-height:14px;font-size:7.85px;color:#3c3c3c;left:1096.50px;">Standalone</div>
<div class="b" style="left:188.50px;top:327.90px;width:1004.20px;height:23.10px;background:#fdfdfd;"></div>
<svg class="b" style="left:195.80px;top:336.40px" width="7" height="7" viewBox="0 0 6 6"><rect x="0.3" y="0.4" width="0.9" height="5.2" fill="#b5b5b5"/><path d="M5.6 0.4 V5.6 L1.6 3 Z" fill="#b5b5b5"/></svg>
<svg class="b" style="left:214.60px;top:336.40px" width="5.8" height="7" viewBox="0 0 5 6"><path d="M4.6 0.4 V5.6 L0.5 3 Z" fill="#b5b5b5"/></svg>
<div class="t" style="top:333.10px;height:14px;line-height:14px;font-size:7.4px;color:#222;font-weight:bold;left:85.30px;width:300px;text-align:center;">1</div>
<div class="t" style="top:333.10px;height:14px;line-height:14px;font-size:7.4px;color:#1b82c6;left:103.30px;width:300px;text-align:center;">2</div>
<div class="t" style="top:333.10px;height:14px;line-height:14px;font-size:7.4px;color:#1b82c6;left:121.30px;width:300px;text-align:center;">3</div>
<svg class="b" style="left:286.40px;top:336.40px" width="5.8" height="7" viewBox="0 0 5 6"><path d="M0.4 0.4 V5.6 L4.5 3 Z" fill="#222"/></svg>
<svg class="b" style="left:304.10px;top:336.40px" width="7" height="7" viewBox="0 0 6 6"><path d="M0.4 0.4 V5.6 L4.4 3 Z" fill="#222"/><rect x="4.8" y="0.4" width="0.9" height="5.2" fill="#222"/></svg>
<div class="b" style="left:332.40px;top:332.00px;width:93.50px;height:16.40px;box-sizing:border-box;border:1px solid #c9c9c9;border-radius:2px;background:#fff;"></div>
<div class="t" style="top:333.80px;height:14px;line-height:14px;font-size:7.6px;color:#333;left:339.20px;">10</div>
<svg class="b" style="left:416.60px;top:339.40px" width="4" height="3.4" viewBox="0 0 4 3.4"><path d="M0 0 H4 L2 3.4 Z" fill="#222"/></svg>
<div class="t" style="top:333.20px;height:14px;line-height:14px;font-size:7.85px;color:#999;left:429.90px;">items per page</div>
<div class="t" style="top:333.00px;height:14px;line-height:14px;font-size:7.9px;color:#999;right:35.70px;">1 - 10 of 29 items</div>
<svg class="b" style="left:1180.4px;top:336.2px" width="8" height="8" viewBox="0 0 8 8"><path d="M6.6 4.2 A2.7 2.7 0 1 1 4.6 1.4" fill="none" stroke="#222" stroke-width="1.1"/><path d="M4.2 0 L6.6 1.5 L4.2 3 Z" fill="#222"/></svg>
<div class="b" style="left:187.50px;top:383.20px;width:493.80px;height:92.50px;box-sizing:border-box;border:1px solid #e0e0e0;border-bottom:none;background:#fff;"></div>
<div class="b" style="left:187.50px;top:383.20px;width:493.80px;height:19.40px;box-sizing:border-box;background:#f4f4f4;border-bottom:1px solid #e0e0e0;"></div>
<div class="t" style="top:386.00px;height:14px;line-height:14px;font-size:7.85px;color:#333;font-weight:bold;left:120.25px;width:300px;text-align:center;">Packets</div>
<div class="b" style="left:353.00px;top:383.20px;width:1.00px;height:19.40px;background:#e0e0e0;"></div>
<div class="t" style="top:386.00px;height:14px;line-height:14px;font-size:7.85px;color:#333;font-weight:bold;left:249.40px;width:300px;text-align:center;">Total</div>
<div class="b" style="left:445.80px;top:383.20px;width:1.00px;height:19.40px;background:#e0e0e0;"></div>
<div class="t" style="top:386.00px;height:14px;line-height:14px;font-size:7.85px;color:#333;font-weight:bold;left:340.10px;width:300px;text-align:center;">Sent</div>
<div class="b" style="left:534.40px;top:383.20px;width:1.00px;height:19.40px;background:#e0e0e0;"></div>
<div class="t" style="top:386.00px;height:14px;line-height:14px;font-size:7.85px;color:#333;font-weight:bold;left:457.85px;width:300px;text-align:center;">Received</div>
<div class="t" style="top:402.60px;height:14px;line-height:14px;font-size:7.85px;color:#3c3c3c;left:192.30px;">Total</div>
<div class="b" style="left:188.50px;top:414.80px;width:491.80px;height:12.20px;background:#f5f5f5;"></div>
<div class="t" style="top:414.80px;height:14px;line-height:14px;font-size:7.85px;color:#3c3c3c;left:192.30px;">Broadcast</div>
<div class="t" style="top:427.00px;height:14px;line-height:14px;font-size:7.85px;color:#3c3c3c;left:192.30px;">Multicast</div>
<div class="b" style="left:188.50px;top:439.20px;width:491.80px;height:12.20px;background:#f5f5f5;"></div>
<div class="t" style="top:439.20px;height:14px;line-height:14px;font-size:7.85px;color:#3c3c3c;left:192.30px;">CRC Errors</div>
<div class="t" style="top:451.40px;height:14px;line-height:14px;font-size:7.85px;color:#3c3c3c;left:192.30px;">Runts</div>
<div class="b" style="left:188.50px;top:463.60px;width:491.80px;height:12.20px;background:#f5f5f5;"></div>
<div class="t" style="top:463.60px;height:14px;line-height:14px;font-size:7.85px;color:#3c3c3c;left:192.30px;">Errors</div>
<div class="b" style="left:699.30px;top:383.20px;width:493.70px;height:80.40px;box-sizing:border-box;border:1px solid #e0e0e0;background:#fff;"></div>
<div class="b" style="left:699.30px;top:383.20px;width:493.70px;height:19.40px;box-sizing:border-box;background:#f4f4f4;border-bottom:1px solid #e0e0e0;"></div>
<div class="t" style="top:386.00px;height:14px;line-height:14px;font-size:7.85px;color:#333;font-weight:bold;left:697.20px;width:300px;text-align:center;">Other Status</div>
<div class="b" style="left:995.10px;top:383.20px;width:1.00px;height:19.40px;background:#e0e0e0;"></div>
<div class="t" style="top:386.00px;height:14px;line-height:14px;font-size:7.85px;color:#333;font-weight:bold;left:944.05px;width:300px;text-align:center;">Status</div>
<div class="t" style="top:402.60px;height:14px;line-height:14px;font-size:7.85px;color:#3c3c3c;left:704.90px;">Uni-Directional Links</div>
<div class="b" style="left:700.30px;top:414.80px;width:491.70px;height:12.20px;background:#f5f5f5;"></div>
<div class="t" style="top:414.80px;height:14px;line-height:14px;font-size:7.85px;color:#3c3c3c;left:704.90px;">Buffer Overflow</div>
<div class="t" style="top:427.00px;height:14px;line-height:14px;font-size:7.85px;color:#3c3c3c;left:704.90px;">Queue Drops</div>
<div class="b" style="left:700.30px;top:439.20px;width:491.70px;height:12.20px;background:#f5f5f5;"></div>
<div class="t" style="top:439.20px;height:14px;line-height:14px;font-size:7.85px;color:#3c3c3c;left:704.90px;">Optics Inserted</div>
<div class="t" style="top:451.40px;height:14px;line-height:14px;font-size:7.85px;color:#3c3c3c;left:704.90px;">Loopback Enabled</div>
<div class="b" style="left:645.00px;top:491.20px;width:87.50px;height:18.00px;box-sizing:border-box;border:1px solid #e4e4e4;border-radius:2.5px;background:#fff;"></div>
<div class="t" style="top:493.30px;height:14px;line-height:14px;font-size:9.1px;color:#cfcfcf;left:538.80px;width:300px;text-align:center;">Clear Counters</div>
<div class="t" style="top:523.20px;height:14px;line-height:14px;font-size:10.6px;color:#1b82c6;left:187.60px;transform:scaleX(0.902);transform-origin:0 50%;-webkit-text-stroke:0.15px #1b82c6;">PORT CHANNEL SUMMARY</div>
<div class="b" style="left:187.60px;top:551.40px;width:492.40px;height:42.20px;box-sizing:border-box;border:1px solid #e0e0e0;background:#fcfcfc;"></div>
<div class="b" style="left:187.60px;top:551.40px;width:492.40px;height:18.40px;box-sizing:border-box;background:#f4f4f4;border-bottom:1px solid #e0e0e0;"></div>
<div class="t" style="top:553.70px;height:14px;line-height:14px;font-size:7.85px;color:#333;font-weight:bold;left:70.85px;width:300px;text-align:center;">Group</div>
<svg class="b" style="left:258.30px;top:558.60px" width="6" height="4" viewBox="0 0 6 4"><path d="M0.6 0.6 L3 3.2 L5.4 0.6" fill="none" stroke="#9a9a9a" stroke-width="0.7"/></svg>
<div class="b" style="left:268.50px;top:551.40px;width:1.00px;height:18.40px;background:#e0e0e0;"></div>
<div class="t" style="top:553.70px;height:14px;line-height:14px;font-size:7.85px;color:#333;font-weight:bold;left:172.80px;width:300px;text-align:center;">Port-channel</div>
<svg class="b" style="left:381.30px;top:558.60px" width="6" height="4" viewBox="0 0 6 4"><path d="M0.6 0.6 L3 3.2 L5.4 0.6" fill="none" stroke="#9a9a9a" stroke-width="0.7"/></svg>
<div class="b" style="left:391.50px;top:551.40px;width:1.00px;height:18.40px;background:#e0e0e0;"></div>
<div class="t" style="top:553.70px;height:14px;line-height:14px;font-size:7.85px;color:#333;font-weight:bold;left:283.75px;width:300px;text-align:center;">Protocol</div>
<svg class="b" style="left:480.20px;top:558.60px" width="6" height="4" viewBox="0 0 6 4"><path d="M0.6 0.6 L3 3.2 L5.4 0.6" fill="none" stroke="#9a9a9a" stroke-width="0.7"/></svg>
<div class="b" style="left:490.40px;top:551.40px;width:1.00px;height:18.40px;background:#e0e0e0;"></div>
<div class="t" style="top:553.70px;height:14px;line-height:14px;font-size:7.85px;color:#333;font-weight:bold;left:370.50px;width:300px;text-align:center;">Ports</div>
<svg class="b" style="left:554.80px;top:558.60px" width="6" height="4" viewBox="0 0 6 4"><path d="M0.6 0.6 L3 3.2 L5.4 0.6" fill="none" stroke="#9a9a9a" stroke-width="0.7"/></svg>
<div class="b" style="left:565.00px;top:551.40px;width:1.00px;height:18.40px;background:#e0e0e0;"></div>
<div class="t" style="top:553.70px;height:14px;line-height:14px;font-size:7.85px;color:#333;font-weight:bold;left:465.30px;width:300px;text-align:center;">SwitchType</div>
<svg class="b" style="left:669.80px;top:558.60px" width="6" height="4" viewBox="0 0 6 4"><path d="M0.6 0.6 L3 3.2 L5.4 0.6" fill="none" stroke="#9a9a9a" stroke-width="0.7"/></svg>
<svg class="b" style="left:195.50px;top:578.60px" width="7" height="7" viewBox="0 0 6 6"><rect x="0.3" y="0.4" width="0.9" height="5.2" fill="#b5b5b5"/><path d="M5.6 0.4 V5.6 L1.6 3 Z" fill="#b5b5b5"/></svg>
<svg class="b" style="left:214.30px;top:578.60px" width="5.8" height="7" viewBox="0 0 5 6"><path d="M4.6 0.4 V5.6 L0.5 3 Z" fill="#b5b5b5"/></svg>
<div class="t" style="top:575.30px;height:14px;line-height:14px;font-size:7.4px;color:#222;font-weight:bold;left:85.20px;width:300px;text-align:center;">0</div>
<svg class="b" style="left:250.70px;top:578.60px" width="5.8" height="7" viewBox="0 0 5 6"><path d="M0.4 0.4 V5.6 L4.5 3 Z" fill="#b5b5b5"/></svg>
<svg class="b" style="left:267.90px;top:578.60px" width="7" height="7" viewBox="0 0 6 6"><path d="M0.4 0.4 V5.6 L4.4 3 Z" fill="#b5b5b5"/><rect x="4.8" y="0.4" width="0.9" height="5.2" fill="#b5b5b5"/></svg>
<div class="b" style="left:295.50px;top:574.00px;width:94.00px;height:16.00px;box-sizing:border-box;border:1px solid #c9c9c9;border-radius:2px;background:#fff;"></div>
<div class="t" style="top:575.60px;height:14px;line-height:14px;font-size:7.6px;color:#333;left:302.30px;">10</div>
<svg class="b" style="left:380.20px;top:581.20px" width="4" height="3.4" viewBox="0 0 4 3.4"><path d="M0 0 H4 L2 3.4 Z" fill="#222"/></svg>
<div class="t" style="top:575.00px;height:14px;line-height:14px;font-size:7.85px;color:#999;left:393.50px;">items per page</div>
<div class="t" style="top:575.00px;height:14px;line-height:14px;font-size:7.9px;color:#999;right:529.70px;">No items to display</div>
</body></html>
